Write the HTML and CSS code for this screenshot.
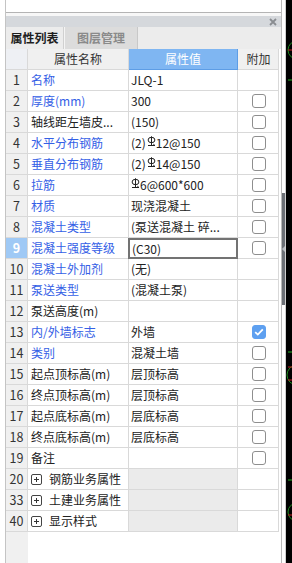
FILE: index.html
```html
<!DOCTYPE html>
<html lang="zh-CN">
<head>
<meta charset="utf-8">
<title>属性列表</title>
<link rel="stylesheet" href="styles.css">
</head>
<body>
<div class="screen">
  <div class="gutter"></div>
  <div class="panel">
    <div class="top"></div>
    <div class="gap"></div>
    <div class="titlebar">
      <svg class="close" width="8" height="8" viewBox="0 0 8 8"><path d="M1 1L7 7M7 1L1 7" stroke="#8a8d91" stroke-width="1.8"/></svg>
    </div>
    <div class="tabs">
      <div class="tab active">属性列表</div>
      <div class="tab">图层管理</div>
    </div>
    <div class="table">
      <div class="row head">
        <div class="c idx"></div>
        <div class="c name">属性名称</div>
        <div class="c val">属性值</div>
        <div class="c add">附加</div>
      </div>
      <div class="row"><div class="c idx">1</div><div class="c name blue">名称</div><div class="c val">JLQ-1</div><div class="c add"></div></div>
      <div class="row"><div class="c idx">2</div><div class="c name blue">厚度(mm)</div><div class="c val">300</div><div class="c add"><span class="cb"></span></div></div>
      <div class="row"><div class="c idx">3</div><div class="c name">轴线距左墙皮...</div><div class="c val">(150)</div><div class="c add"><span class="cb"></span></div></div>
      <div class="row"><div class="c idx">4</div><div class="c name blue">水平分布钢筋</div><div class="c val">(2)<svg class="bar" width="9" height="11" viewBox="0 0 9 11"><ellipse cx="4.5" cy="4" rx="3.4" ry="2.7" fill="none" stroke="#222" stroke-width="1"/><path d="M4.5 0.3V9.5M1 9.5H8M6.3 8.2L8 9.5" stroke="#222" stroke-width="1" fill="none"/></svg>12@150</div><div class="c add"><span class="cb"></span></div></div>
      <div class="row"><div class="c idx">5</div><div class="c name blue">垂直分布钢筋</div><div class="c val">(2)<svg class="bar" width="9" height="11" viewBox="0 0 9 11"><ellipse cx="4.5" cy="4" rx="3.4" ry="2.7" fill="none" stroke="#222" stroke-width="1"/><path d="M4.5 0.3V9.5M1 9.5H8M6.3 8.2L8 9.5" stroke="#222" stroke-width="1" fill="none"/></svg>14@150</div><div class="c add"><span class="cb"></span></div></div>
      <div class="row"><div class="c idx">6</div><div class="c name blue">拉筋</div><div class="c val"><svg class="bar lead" width="9" height="11" viewBox="0 0 9 11"><ellipse cx="4.5" cy="4" rx="3.4" ry="2.7" fill="none" stroke="#222" stroke-width="1"/><path d="M4.5 0.3V9.5M1 9.5H8M6.3 8.2L8 9.5" stroke="#222" stroke-width="1" fill="none"/></svg>6@600*600</div><div class="c add"><span class="cb"></span></div></div>
      <div class="row"><div class="c idx">7</div><div class="c name blue">材质</div><div class="c val">现浇混凝土</div><div class="c add"><span class="cb"></span></div></div>
      <div class="row"><div class="c idx">8</div><div class="c name blue">混凝土类型</div><div class="c val">(泵送混凝土 碎...</div><div class="c add"><span class="cb"></span></div></div>
      <div class="row sel"><div class="c idx">9</div><div class="c name blue">混凝土强度等级</div><div class="c val edit">(C30)</div><div class="c add"><span class="cb"></span></div></div>
      <div class="row"><div class="c idx">10</div><div class="c name blue">混凝土外加剂</div><div class="c val">(无)</div><div class="c add"></div></div>
      <div class="row"><div class="c idx">11</div><div class="c name blue">泵送类型</div><div class="c val">(混凝土泵)</div><div class="c add"></div></div>
      <div class="row"><div class="c idx">12</div><div class="c name">泵送高度(m)</div><div class="c val"></div><div class="c add"></div></div>
      <div class="row"><div class="c idx">13</div><div class="c name blue">内/外墙标志</div><div class="c val">外墙</div><div class="c add"><span class="cb on"><svg width="10" height="8" viewBox="0 0 10 8"><path d="M1.2 4.2L3.8 6.6L8.8 1.4" stroke="#fff" stroke-width="1.8" fill="none"/></svg></span></div></div>
      <div class="row"><div class="c idx">14</div><div class="c name blue">类别</div><div class="c val">混凝土墙</div><div class="c add"><span class="cb"></span></div></div>
      <div class="row"><div class="c idx">15</div><div class="c name">起点顶标高(m)</div><div class="c val">层顶标高</div><div class="c add"><span class="cb"></span></div></div>
      <div class="row"><div class="c idx">16</div><div class="c name">终点顶标高(m)</div><div class="c val">层顶标高</div><div class="c add"><span class="cb"></span></div></div>
      <div class="row"><div class="c idx">17</div><div class="c name">起点底标高(m)</div><div class="c val">层底标高</div><div class="c add"><span class="cb"></span></div></div>
      <div class="row"><div class="c idx">18</div><div class="c name">终点底标高(m)</div><div class="c val">层底标高</div><div class="c add"><span class="cb"></span></div></div>
      <div class="row"><div class="c idx">19</div><div class="c name">备注</div><div class="c val"></div><div class="c add"><span class="cb"></span></div></div>
      <div class="row group"><div class="c idx">20</div><div class="c name"><span class="plus"></span>钢筋业务属性</div><div class="c val"></div><div class="c add"></div></div>
      <div class="row group"><div class="c idx">33</div><div class="c name"><span class="plus"></span>土建业务属性</div><div class="c val"></div><div class="c add"></div></div>
      <div class="row group"><div class="c idx">40</div><div class="c name"><span class="plus"></span>显示样式</div><div class="c val"></div><div class="c add"></div></div>
      <div class="filler"><div class="fill-idx"></div></div>
    </div>
  </div>
  <div class="split"><div class="handle"><span class="arrow"></span></div></div>
  <div class="canvas">
    <svg class="cad" width="6" height="563" viewBox="0 0 6 563">
      <circle cx="11" cy="50" r="9" fill="none" stroke="#1e8a1e" stroke-width="1"/>
      <path d="M2 50H6" stroke="#c02020" stroke-width="1"/>
      <path d="M2 80H6" stroke="#22b022" stroke-width="1"/>
      <path d="M2 352H6" stroke="#22b022" stroke-width="1"/>
      <circle cx="11" cy="375" r="10" fill="none" stroke="#1e8a1e" stroke-width="1"/>
      <path d="M2 367H6M2 380H6" stroke="#c02020" stroke-width="1"/>
      <path d="M2 480H6" stroke="#22b022" stroke-width="1"/>
      <circle cx="11" cy="512" r="9" fill="none" stroke="#1e8a1e" stroke-width="1"/>
      <path d="M2 515H6" stroke="#c02020" stroke-width="1"/>
    </svg>
  </div>
</div>
</body>
</html>
```
FILE: styles.css
```css
* { box-sizing: border-box; }
html, body {
  margin: 0;
  padding: 0;
  background: #ffffff;
}
body {
  width: 292px;
  height: 563px;
  overflow: hidden;
  font-family: "Noto Sans CJK SC", "Noto Sans", sans-serif;
  font-size: 12px;
  color: #222;
}
.screen {
  display: flex;
  height: 563px;
}
.gutter {
  width: 6px;
  flex: none;
  background: #fff;
  border-right: 1px solid #c4c4c4;
}
.panel {
  width: 276px;
  flex: none;
  display: flex;
  flex-direction: column;
  border-right: 1px solid #b9b9b9;
  background: #fff;
}
.top {
  height: 13px;
  border-bottom: 1px solid #b4b4b4;
  background: #fff;
}
.gap {
  height: 3px;
  background: #f7f7f7;
}
.titlebar {
  height: 11px;
  background: #d5d8dc;
  display: flex;
  justify-content: flex-end;
  align-items: center;
  padding-right: 4px;
}
.close { display: block; }
.tabs {
  height: 22px;
  background: #ececec;
  display: flex;
}
.tab {
  height: 22px;
  line-height: 21px;
  font-weight: bold;
  padding: 0 12px;
  color: #8a8a8a;
  background: #dcdcdc;
  border-right: 1px solid #c8c8c8;
  border-left: 1px solid #f4f4f4;
  white-space: nowrap;
}
.tab.active {
  color: #1e1e1e;
  background: #ececec;
  border-left: 0;
  border-right: 1px solid #d0d0d0;
  width: 58px;
  padding: 0;
  text-align: center;
}
.table {
  flex: 1;
  display: flex;
  flex-direction: column;
}
.row {
  display: grid;
  grid-template-columns: 22px 101px 109px 41px;
  height: 21px;
}
.c {
  border-right: 1px solid #d9d9d9;
  border-bottom: 1px solid #d9d9d9;
  line-height: 20px;
  white-space: nowrap;
  overflow: hidden;
  display: flex;
  align-items: center;
}
.idx {
  background: #f0f0f0;
  justify-content: center;
  color: #333;
  font-size: 12.5px;
}
.name { padding-left: 3px; }
.val { padding-left: 2px; }
.add { justify-content: center; padding-left: 1px; }
.blue { color: #3460e6; }
.head .c { background: #f0f0f0; justify-content: center; color: #333; }
.head .idx { background: #eef0f4; }
.head .name { padding-left: 0; }
.head .val {
  background: #7fb6f2;
  color: #fff;
  border-right-color: #5d9de6;
  border-bottom-color: #5d9de6;
  padding-left: 0;
}
.bar {
  display: inline-block;
  margin: 0 0 3px 1px;
  flex: none;
}
.bar.lead { margin-left: 0; }
.cb {
  width: 14px;
  height: 14px;
  border: 1px solid #8e8e8e;
  border-radius: 3px;
  background: #fff;
  display: flex;
  align-items: center;
  justify-content: center;
}
.cb.on {
  background: #5ea0f0;
  border-color: #5ea0f0;
}
.sel .idx {
  background: #9fc9f5;
  color: #fff;
  font-weight: bold;
}
.val.edit {
  border: 2px solid #737373;
  margin-left: -1px;
  padding-left: 2px;
}
.group .val { background: #ebebeb; }
.plus {
  width: 11px;
  height: 11px;
  border: 1px solid #444;
  border-radius: 2px;
  margin-right: 7px;
  flex: none;
  background:
    linear-gradient(#333, #333) center / 5px 1px no-repeat,
    linear-gradient(#333, #333) center / 1px 5px no-repeat;
}
.filler {
  flex: 1;
  display: flex;
}
.fill-idx {
  width: 22px;
  background: #f0f0f0;
}
.split {
  width: 4px;
  flex: none;
  background: #fff;
  border-right: 1px solid #d0d0d0;
}
.handle {
  margin-top: 193px;
  height: 112px;
  background: #6c7076;
  display: flex;
  align-items: center;
  justify-content: center;
}
.arrow {
  width: 0;
  height: 0;
  border-top: 3px solid transparent;
  border-bottom: 3px solid transparent;
  border-right: 3px solid #b9bdc2;
}
.canvas {
  flex: 1;
  background: #000;
}
.cad { display: block; }
```
